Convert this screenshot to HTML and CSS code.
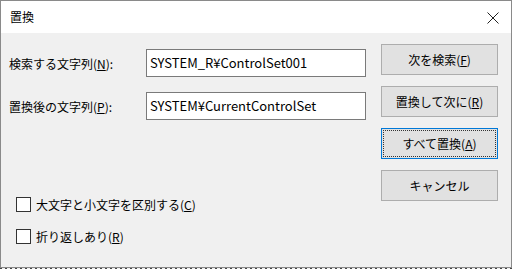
FILE: index.html
```html
<!DOCTYPE html>
<html lang="ja">
<head>
  <meta charset="UTF-8" />
  <title>置換</title>
  <link rel="stylesheet" href="styles.css">
</head>
<body>
  <div class="window">
    <!-- タイトルバー -->
    <div class="titlebar">
      <span class="title">置換</span>
      <svg class="close" width="12" height="12" viewBox="0 0 12 12">
        <path d="M0.5 0.5 L11.5 11.5 M11.5 0.5 L0.5 11.5" stroke="#222" stroke-width="1" fill="none"/>
      </svg>
    </div>

    <div class="client">
      <div class="form">
        <div class="field">
          <label>検索する文字列(<u>N</u>):</label>
          <div class="input">SYSTEM_R¥ControlSet001</div>
        </div>
        <div class="field">
          <label>置換後の文字列(<u>P</u>):</label>
          <div class="input">SYSTEM¥CurrentControlSet</div>
        </div>

        <div class="checks">
          <div class="check"><span class="box"></span>大文字と小文字を区別する(<u>C</u>)</div>
          <div class="check"><span class="box"></span>折り返しあり(<u>R</u>)</div>
        </div>
      </div>

      <div class="buttons">
        <button>次を検索(<u>F</u>)</button>
        <button>置換して次に(<u>R</u>)</button>
        <button class="default"><span class="focus">すべて置換(<u>A</u>)</span></button>
        <button>キャンセル</button>
      </div>
    </div>
  </div>
  <div class="under"></div>
</body>
</html>
```

FILE: styles.css
```css
html, body {
  margin: 0;
  padding: 0;
  background: #f0f0f0;
}
body {
  font-family: "Noto Sans CJK JP", "Noto Sans", sans-serif;
  font-size: 12px;
  color: #000;
}
.window {
  width: 512px;
  height: 268px;
  box-sizing: border-box;
  border: 1px solid #8a8a8a;
  background: #f0f0f0;
  display: flex;
  flex-direction: column;
}
.titlebar {
  height: 32px;
  background: #fff;
  display: flex;
  align-items: center;
  justify-content: space-between;
  padding: 0 12px 0 9px;
  font-size: 12px;
}
.title {
  margin-top: -1px;
}
.close {
  margin-top: 1px;
}
.client {
  flex: 1;
  display: flex;
  padding: 11px 13px 0 8px;
}
.form {
  flex: 1;
}
.field {
  display: flex;
  align-items: center;
  margin-bottom: 15px;
}
.field:first-child {
  margin-top: 5px;
}
.field label {
  width: 137px;
}
.input {
  width: 220px;
  height: 28px;
  box-sizing: border-box;
  border: 1px solid #7a7a7a;
  background: #fff;
  padding: 0 3px;
  font-family: "Noto Sans CJK JP", "Noto Sans", sans-serif;
  font-size: 13px;
  line-height: 25px;
}
.checks {
  margin-top: 75px;
  padding-left: 7px;
  display: flex;
  flex-direction: column;
  gap: 14px;
}
.check {
  display: flex;
  align-items: center;
  height: 18px;
}
.box {
  width: 13px;
  height: 13px;
  border: 1px solid #333;
  background: #fff;
  margin-right: 5px;
}
.buttons {
  display: flex;
  flex-direction: column;
  gap: 11px;
  width: 117px;
}
button {
  height: 31px;
  border: 1px solid #adadad;
  background: #e1e1e1;
  font-family: "Noto Sans CJK JP", "Noto Sans", sans-serif;
  font-size: 12px;
  color: #000;
  padding: 0;
}
button.default {
  border: 1px solid #0078d7;
  padding: 1px;
}
.focus {
  display: flex;
  align-items: center;
  justify-content: center;
  height: 100%;
  box-sizing: border-box;
  border: 1px dotted #333;
}
.under {
  height: 1px;
  background: repeating-linear-gradient(90deg, #444 0 2px, #f0f0f0 2px 5px);
}
```
